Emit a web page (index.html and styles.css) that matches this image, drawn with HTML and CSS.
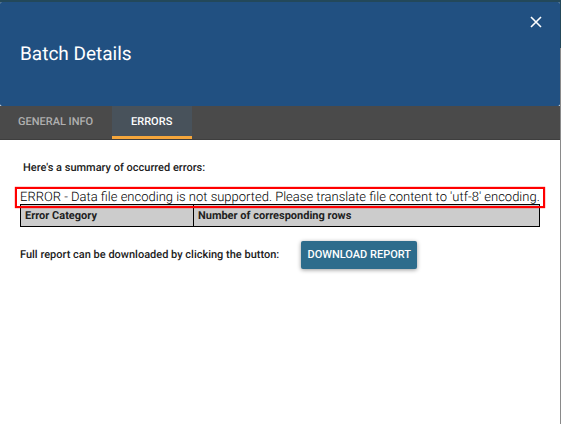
FILE: index.html
```html
<!DOCTYPE html>
<html lang="en">
<head>
<meta charset="utf-8">
<title>Batch Details</title>
<link rel="stylesheet" href="styles.css">
</head>
<body>
<main class="dialog">
  <header class="dialog-header">
    <button class="close" type="button" aria-label="Close">
      <svg viewBox="0 0 12 12" width="12" height="12" aria-hidden="true"><path d="M1 1 11 11M11 1 1 11"/></svg>
    </button>
    <h1 class="title">Batch Details</h1>
  </header>
  <nav class="tabs">
    <a class="tab" href="#general">GENERAL INFO</a>
    <a class="tab tab-active" href="#errors" aria-current="page">ERRORS</a>
  </nav>
  <section class="content" id="errors">
    <p class="summary">Here's a summary of occurred errors:</p>
    <p class="error">ERROR - Data file encoding is not supported. Please translate file content to 'utf-8' encoding.</p>
    <table class="error-table">
      <thead>
        <tr><th class="category">Error Category</th><th>Number of corresponding rows</th></tr>
      </thead>
    </table>
    <div class="report">
      <span>Full report can be downloaded by clicking the button:</span>
      <button class="download" type="button">DOWNLOAD REPORT</button>
    </div>
  </section>
</main>
</body>
</html>
```
FILE: styles.css
```css
* {
  box-sizing: border-box;
}

body {
  margin: 0;
  min-height: 100vh;
  display: flex;
  padding: 2px 1px 0 0;
  background: linear-gradient(#23485a 48px, #8a8a8a 48px);
  font-family: Roboto, "Liberation Sans", sans-serif;
  text-rendering: geometricPrecision;
  color: #212121;
}

.dialog {
  flex: 1;
  min-width: 0;
  background: #fff;
  border-radius: 2px 2px 0 0;
}

.dialog-header {
  display: flex;
  flex-direction: column;
  height: 104px;
  padding: 10px 14px 0 20px;
  background: #215081;
  border-radius: 2px;
}

.close {
  align-self: flex-end;
  display: flex;
  align-items: center;
  justify-content: center;
  width: 20px;
  height: 20px;
  padding: 0;
  border: 0;
  background: none;
}

.close svg {
  fill: none;
  stroke: #fff;
  stroke-width: 1.6;
}

.title {
  margin: 10px 0 0;
  font-size: 19px;
  line-height: 24px;
  font-weight: 400;
  color: #fff;
}

.tabs {
  display: flex;
  height: 34px;
  background: #4a4a4a;
  border-bottom: 1px solid #3e3e3e;
}

.tab {
  min-width: 80px;
  padding: 0 19px 0 18px;
  border-bottom: 3px solid transparent;
  font-size: 11px;
  line-height: 32px;
  font-weight: 500;
  text-align: center;
  color: #b0b0b0;
  text-decoration: none;
}

.tab-active {
  border-bottom-color: #f5a63b;
  background: #48525b;
  color: #fff;
}

.content {
  padding: 20px;
}

.summary {
  margin: 0 3px;
  font-size: 11px;
  line-height: 16px;
  font-weight: 500;
}

.error {
  position: relative;
  z-index: 1;
  margin: 11px -5px -4px;
  padding: 0 3px;
  border: 2px solid #f00;
  box-shadow: 0 0 1px #f00;
  font-size: 13px;
  line-height: 17px;
  font-weight: 300;
  color: #000;
  white-space: nowrap;
}

.error-table {
  width: 100%;
  border-collapse: collapse;
  background: #ccc;
}

.error-table th {
  height: 22px;
  padding: 0 4px;
  border: 1px solid #000;
  font-size: 11px;
  line-height: 16px;
  font-weight: 700;
  text-align: left;
}

.error-table .category {
  width: 33.33%;
}

.report {
  display: flex;
  align-items: center;
  gap: 22px;
  margin-top: 14px;
  font-size: 11px;
  line-height: 16px;
  font-weight: 500;
}

.download {
  min-width: 116px;
  height: 28px;
  padding: 0 4px;
  border: 0;
  border-radius: 2px;
  background: #2d6c8c;
  box-shadow: 0 1px 4px rgba(0, 0, 0, 0.4);
  font: 500 11px/28px Roboto, "Liberation Sans", sans-serif;
  color: #fff;
}
```
